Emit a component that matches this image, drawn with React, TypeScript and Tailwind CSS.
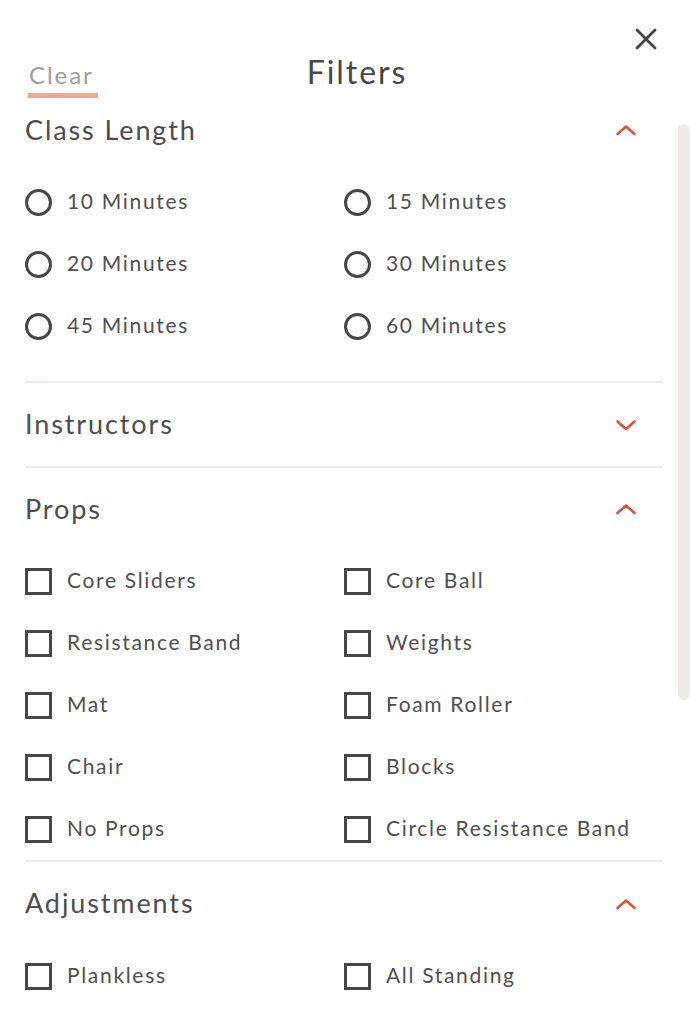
const FONT = "font-['Lato','Noto_Sans',sans-serif]";

const classLengths = ["10 Minutes", "15 Minutes", "20 Minutes", "30 Minutes", "45 Minutes", "60 Minutes"];
const props = [
    "Core Sliders",
    "Core Ball",
    "Resistance Band",
    "Weights",
    "Mat",
    "Foam Roller",
    "Chair",
    "Blocks",
    "No Props",
    "Circle Resistance Band",
];
const adjustments = ["Plankless", "All Standing"];

function Chevron({ up }: { up: boolean }) {
    return (
        <svg width="22" height="14" viewBox="0 0 22 14" fill="none" className="text-[#d4553a]">
            <polyline
                points={up ? "2.5,11 11,3.5 19.5,11" : "2.5,3.5 11,11 19.5,3.5"}
                stroke="currentColor"
                strokeWidth="2.6"
                strokeLinecap="round"
                strokeLinejoin="round"
            />
        </svg>
    );
}

function SectionHeader({ title, up, h }: { title: string; up: boolean; h: string }) {
    return (
        <div className={`flex items-center justify-between pr-[26px] ${h}`}>
            <span className="text-[27px] tracking-[0.07em] text-[#4d4d4d]">{title}</span>
            <Chevron up={up} />
        </div>
    );
}

function Option({ label, kind }: { label: string; kind: "radio" | "check" }) {
    return (
        <label className="flex h-[62px] items-center gap-[15px]">
            <span
                className={
                    kind === "radio"
                        ? "h-[27px] w-[27px] shrink-0 rounded-full border-[3px] border-[#474747]"
                        : "h-[27px] w-[27px] shrink-0 border-[3px] border-[#474747]"
                }
            />
            <span className="pb-[3px] text-[21px] tracking-[0.08em] text-[#4f4f4f]">{label}</span>
        </label>
    );
}

function Divider() {
    return <div className="h-[2px] bg-[#f1ebe7]" />;
}

export default function App() {
    return (
        <div className={`relative h-[1024px] w-[690px] overflow-hidden bg-white ${FONT}`}>
            {/* scrollbar */}
            <div className="absolute right-0 top-[124px] h-[576px] w-[12px] rounded-[6px] bg-[#f2eae5]" />

            <div className="relative h-[108px]">
                <button className="absolute right-[32px] top-[27px] text-[#454545]">
                    <svg width="24" height="24" viewBox="0 0 24 24" fill="none">
                        <path d="M3 3 L21 21 M21 3 L3 21" stroke="currentColor" strokeWidth="2.8" strokeLinecap="round" />
                    </svg>
                </button>
                <div className="grid pt-[52px]">
                    <div className="col-start-1 row-start-1 flex flex-col items-start pl-[28px] pt-[8px]">
                        <span className="px-[1px] text-[24px] leading-[30px] tracking-[0.08em] text-[#9d9d9d]">Clear</span>
                        <span className="mt-[3px] h-[5px] w-[70px] bg-[#eca899]" />
                    </div>
                    <div className="col-start-1 row-start-1 pl-[24px] text-center text-[32px] leading-[40px] tracking-[0.06em] text-[#474747]">
                        Filters
                    </div>
                </div>
            </div>

            <div className="ml-[25px] w-[638px]">
                <SectionHeader title="Class Length" up h="h-[44px]" />
                <div className="mt-[19px] grid grid-cols-[319px_1fr]">
                    {classLengths.map((l) => (
                        <Option key={l} label={l} kind="radio" />
                    ))}
                </div>
                <div className="mt-[24px]">
                    <Divider />
                </div>

                <SectionHeader title="Instructors" up={false} h="h-[83px]" />
                <Divider />

                <SectionHeader title="Props" up h="h-[82px]" />
                <div className="grid grid-cols-[319px_1fr]">
                    {props.map((p) => (
                        <Option key={p} label={p} kind="check" />
                    ))}
                </div>
                <Divider />

                <SectionHeader title="Adjustments" up h="h-[83px]" />
                <div className="grid grid-cols-[319px_1fr]">
                    {adjustments.map((a) => (
                        <Option key={a} label={a} kind="check" />
                    ))}
                </div>
            </div>
        </div>
    );
}
